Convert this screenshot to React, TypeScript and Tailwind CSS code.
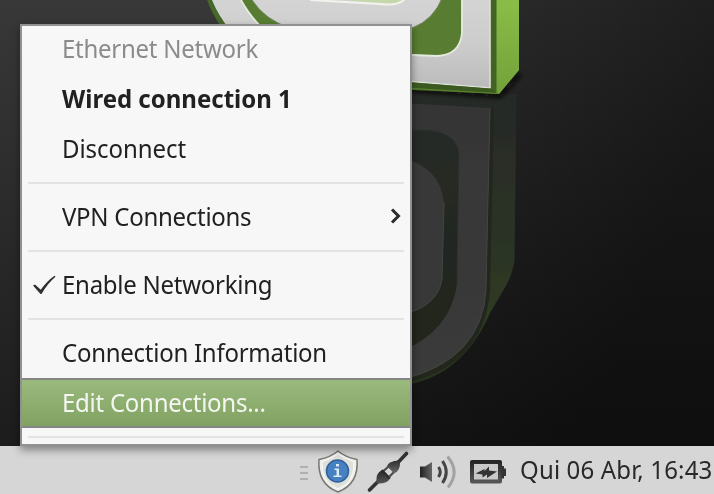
import type { ReactNode } from "react";

function Wallpaper() {
  return (
    <svg className="block h-[446px] w-[714px]" viewBox="0 0 714 446" fill="none">
      <defs>
        <linearGradient id="bg" x1="0" y1="0" x2="0" y2="1">
          <stop offset="0" stopColor="#383838" />
          <stop offset="1" stopColor="#1c1c1c" />
        </linearGradient>
        <linearGradient id="bgRight" x1="0" y1="0" x2="1" y2="0.25">
          <stop offset="0.3" stopColor="#000" stopOpacity="0" />
          <stop offset="1" stopColor="#000" stopOpacity="0.5" />
        </linearGradient>
        <linearGradient id="face" x1="0" y1="0" x2="0" y2="90" gradientUnits="userSpaceOnUse">
          <stop offset="0" stopColor="#d4d4d4" />
          <stop offset="0.5" stopColor="#cccccc" />
          <stop offset="1" stopColor="#bababa" />
        </linearGradient>
        <linearGradient id="side" x1="0" y1="0" x2="0" y2="94" gradientUnits="userSpaceOnUse">
          <stop offset="0" stopColor="#8abd48" />
          <stop offset="1" stopColor="#73a13a" />
        </linearGradient>
        <linearGradient id="sideReflection" x1="0" y1="92" x2="0" y2="384" gradientUnits="userSpaceOnUse">
          <stop offset="0" stopColor="#272927" />
          <stop offset="0.5" stopColor="#2b3326" />
          <stop offset="0.75" stopColor="#2e3a22" />
          <stop offset="1" stopColor="#28331f" />
        </linearGradient>
        <linearGradient id="faceReflection" x1="0" y1="100" x2="0" y2="380" gradientUnits="userSpaceOnUse">
          <stop offset="0" stopColor="#343434" />
          <stop offset="0.3" stopColor="#383838" />
          <stop offset="1" stopColor="#3a3a3a" />
        </linearGradient>
        <linearGradient id="recess" x1="0" y1="130" x2="0" y2="350" gradientUnits="userSpaceOnUse">
          <stop offset="0" stopColor="#272a26" />
          <stop offset="1" stopColor="#20261c" />
        </linearGradient>
        <filter id="soft" x="-20%" y="-100%" width="140%" height="300%">
          <feGaussianBlur stdDeviation="2.5" />
        </filter>
        <filter id="edge" x="-10%" y="-10%" width="120%" height="120%">
          <feGaussianBlur stdDeviation="0.6" />
        </filter>
      </defs>
      <rect width="714" height="446" fill="url(#bg)" />
      <rect width="714" height="446" fill="url(#bgRight)" />

      {/* reflection on the floor */}
      <g filter="url(#edge)">
        <path d="M400 94H516.500L514.500 260Q513 272 507 284L490 313Q462 378 400 386Z" fill="url(#sideReflection)" />
        <path d="M492 108L488 290Q482 366 400 382" stroke="#20261d" strokeWidth="4" />
        <path d="M400 103L490 108L486 290Q482 360 400 380Z" fill="url(#faceReflection)" />
        <path d="M490 108L486 290Q482 360 400 380" stroke="#454545" strokeWidth="1" />
        <path d="M400 130H430Q457 134 459 153L457 284Q451 331 400 352Z" fill="url(#recess)" />
        <path d="M400 130H430Q457 134 459 153L457 284" stroke="#303230" />
        <path d="M400 157Q441 167 444 203L442 279Q438 307 400 315Z" fill="#383838" />
        <path d="M444 203L442 279Q438 307 400 315" stroke="#434643" />
      </g>

      {/* logo block */}
      <path d="M390 88L500 96L520 74" stroke="#080808" strokeWidth="4" filter="url(#soft)" />
      <path d="M207 0Q212 14 222 28H412V90L499 94L519 70V0Z" fill="#48682a" />
      <path d="M212 0Q218 15 230 30H412V81L490 88V0Z" fill="url(#face)" />
      <path d="M412 81.500L490 88V0" stroke="#dfe2db" strokeWidth="1.500" />
      <path d="M412 82.500L491 88.500L497 93L412 88Z" fill="#3b5a20" />
      <path d="M412 88.500L498 93.500" stroke="#5c852d" strokeWidth="1.200" />
      <path d="M496 0V92L499 94L519 70V0Z" fill="url(#side)" />
      <path d="M492 0H496.500V92L492 89Z" fill="#426323" />
      <g filter="url(#edge)">
        <path d="M241 0Q249 15 262 28H400V54L437 55.500Q460 54 461.500 33V0Z" fill="#587d31" />
        <path d="M241 0Q249 15 262 28M400 54.500L437 56Q460 55 462 33V0" stroke="#e5eade" strokeWidth="1.800" />
        <path d="M252 0Q265 20 290 28H412Q434 20 443 -4H252Z" fill="url(#face)" />
        <path d="M252 0Q265 20 290 28M412 28Q434 20 443 -4" stroke="#6c8053" strokeWidth="1" />
      </g>
      <path d="M345 0H403Q398 5 389 4Z" fill="#c5d8ac" />
      <path d="M310 0L380 4Q397 6 404 0" stroke="#f2f3ef" strokeWidth="2" />
    </svg>
  );
}

function Separator() {
  return (
    <div className="h-[18px] shrink-0 px-1.5 pt-2">
      <div className="h-0.5 bg-[#e3e3e3]" />
    </div>
  );
}

function Item({ children, mark, arrow, className = "tracking-[-0.26px]" }: { children: ReactNode; mark?: boolean; arrow?: boolean; className?: string }) {
  return (
    <div className={`flex h-[50px] shrink-0 items-center ${className}`}>
      <div className="w-10 shrink-0 pl-2.5">
        {mark && (
          <svg className="size-6" viewBox="0 0 24 24" fill="none">
            <path d="M1 12.500L3 11.500L8.800 16.800Q15 8 22.500 2.800L23.500 3.800Q16 10 9.500 21H8.500Z" fill="#303030" />
          </svg>
        )}
      </div>
      <span className="grow origin-center scale-y-[1.045] whitespace-nowrap">{children}</span>
      {arrow && (
        <svg className="mr-2 h-5 w-3" viewBox="0 0 12 20" fill="none">
          <path d="M2 2.500L8.500 9L2 15.500" stroke="#2b2b2b" strokeWidth="3" />
        </svg>
      )}
    </div>
  );
}

function NetworkMenu() {
  return (
    <div className="absolute top-6 left-5 flex h-[422px] w-[392px] flex-col overflow-hidden border-2 border-[#919191] bg-[#f7f7f7] text-[24px] leading-[34px] text-[#212121] shadow-[0_4px_8px_rgba(0,0,0,0.4)]">
      <Item className="-mt-0.5 tracking-[-0.26px] text-[#8b8b8b]">Ethernet Network</Item>
      <Item className="font-bold">Wired connection 1</Item>
      <Item className="tracking-[-0.05px]">Disconnect</Item>
      <Separator />
      <Item arrow className="tracking-[-0.28px]">VPN Connections</Item>
      <Separator />
      <Item mark>Enable Networking</Item>
      <Separator />
      <Item>Connection Information</Item>
      <Item className="border-y-2 border-[#858585] bg-linear-to-b from-[#9aba7e] to-[#82a263] tracking-[-0.26px] text-[#f4f6f1]">Edit Connections...</Item>
      <Separator />
    </div>
  );
}

function TrayIcons() {
  return (
    <svg className="h-12 w-[220px]" viewBox="290 446 220 48" fill="none">
      <defs>
        <linearGradient id="metal" x1="0" y1="0" x2="0" y2="1">
          <stop offset="0" stopColor="#262626" />
          <stop offset="1" stopColor="#555" />
        </linearGradient>
        <linearGradient id="plug" x1="0" y1="0" x2="0" y2="1">
          <stop offset="0" stopColor="#303030" />
          <stop offset="1" stopColor="#6a6a6a" />
        </linearGradient>
        <linearGradient id="speaker" x1="0" y1="0" x2="1" y2="0">
          <stop offset="0" stopColor="#222" />
          <stop offset="1" stopColor="#666" />
        </linearGradient>
      </defs>
      <path d="M300 467H308M300 473H308M300 479H308" stroke="#a4a4a4" strokeWidth="1.500" />
      {/* update shield */}
      <path d="M338 451Q345 457 357 459.500Q359 484 338 492Q317 484 319 459.500Q331 457 338 451Z" fill="#eeeeeb" stroke="#777773" strokeWidth="1.500" />
      <path d="M338 454Q345 459 354 461.500Q355 482 338 489Q321 482 322 461.500Q331 459 338 454Z" fill="#dfe0da" stroke="#fafaf8" />
      <circle cx="337.500" cy="471" r="11" fill="#4681c2" stroke="#30609c" strokeWidth="1.500" />
      <path d="M336 464H339V466.500H336ZM334.500 468.500H339V475.500H341.500V477H333.500V475.500H336.500V470H334.500Z" fill="#e0eaf5" />
      {/* network plugs */}
      <path d="M369.500 490L378 481.500M398 462.500L406.500 453.500" stroke="#333" strokeWidth="3.600" strokeLinecap="round" />
      <path d="M376.500 482.500Q375.500 473 382 470L390 478.500Q387 484 377.500 483.500Z" fill="url(#metal)" />
      <path d="M387 466Q389 461 398.500 460.500L400 462Q400.500 471 394 473.500Z" fill="url(#plug)" />
      <path d="M383.500 471L388.500 466.500M389.500 476.500L393.500 472.500" stroke="#4b4b4b" strokeWidth="2.200" />
      <path d="M382 470L390 478.500" stroke="#2b2b2b" strokeWidth="2" />
      {/* volume */}
      <path d="M420 466.500H425L432 462V482L425 477.500H420Z" fill="url(#speaker)" />
      <path d="M438.500 467Q442 472 438.500 477M442.500 461Q450 472 442.500 483" stroke="#444" strokeWidth="3" />
      <path d="M447.500 456.500Q460.500 472 448 487.500" stroke="#a2a2a2" strokeWidth="3" />
      {/* battery */}
      <path d="M472 462H500V481.500H472Z" fill="#c9c9c9" stroke="url(#metal)" strokeWidth="4" strokeLinejoin="round" />
      <path d="M501.500 466H504V468.500H506V476H504V478.500H501.500Z" fill="#333" />
      <path d="M475.500 473.500L484.500 469V471L489 466.500V470.500L497 471.500L487 478V474.500L482.500 477.500V474.500Z" fill="#333" />
    </svg>
  );
}

export default function App() {
  return (
    <main className="relative flex h-[494px] w-[714px] flex-col overflow-hidden bg-[#1c1c1c] font-['Noto_Sans',sans-serif]">
      <Wallpaper />
      <footer className="flex h-12 shrink-0 items-center bg-[#d6d6d6] pl-[290px]">
        <TrayIcons />
        <time className="ml-2.5 origin-center scale-y-[1.045] whitespace-nowrap text-[24px] leading-[34px] tracking-[0.15px] text-[#292929]">Qui 06 Abr, 16:43</time>
      </footer>
      <NetworkMenu />
    </main>
  );
}
